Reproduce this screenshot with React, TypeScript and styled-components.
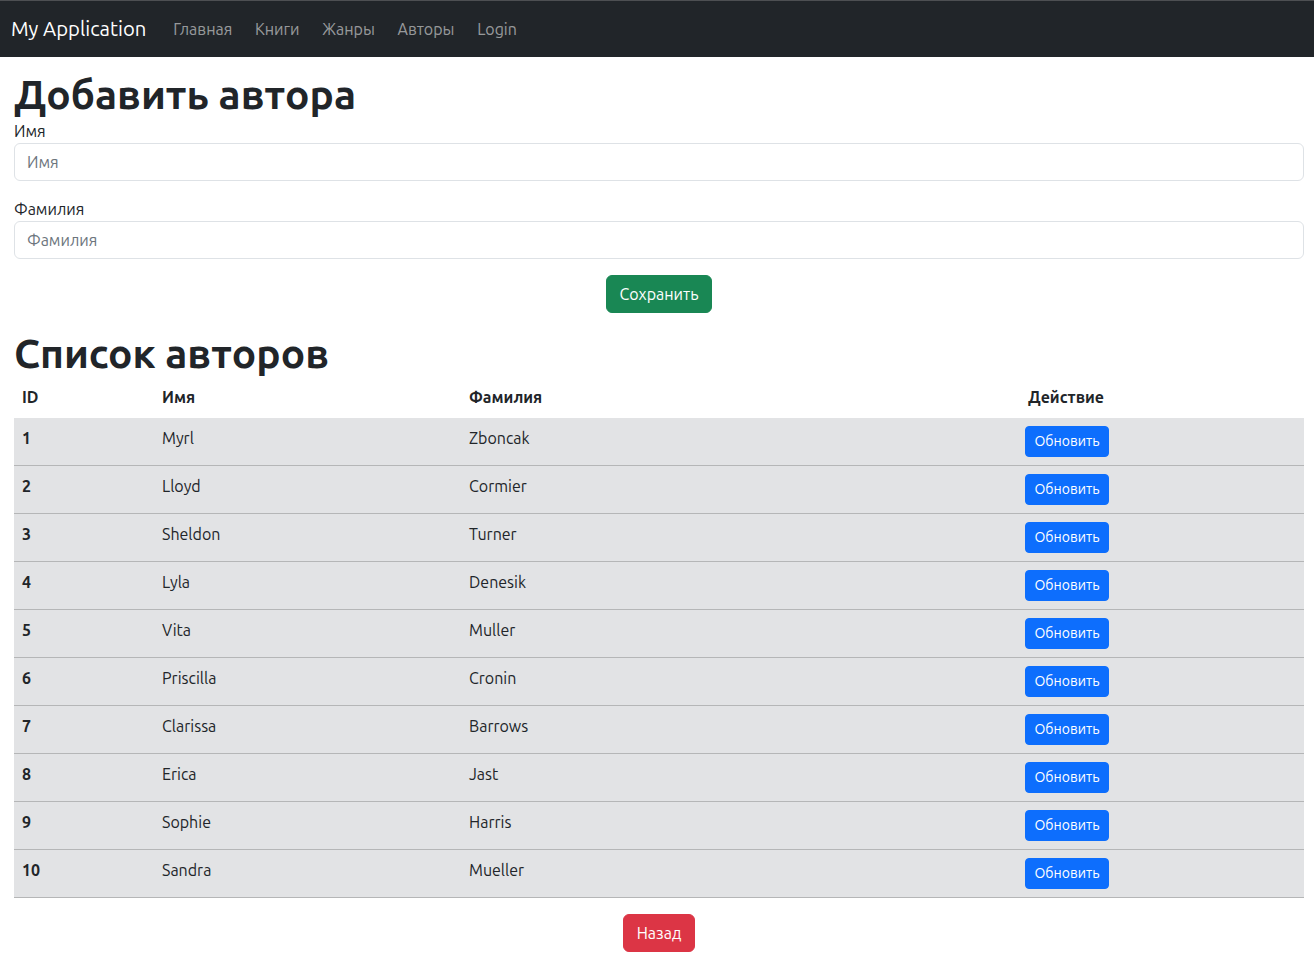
import React from "react";
import styled, { createGlobalStyle } from "styled-components";

const GlobalStyle = createGlobalStyle`
  *, *::before, *::after { box-sizing: border-box; }
  body {
    margin: 0;
    font-family: Ubuntu, "Noto Sans", "Liberation Sans", sans-serif;
    font-size: 16px;
    line-height: 1.5;
    color: #212529;
    background: #fff;
  }
`;

const Navbar = styled.nav`
  display: flex;
  align-items: center;
  height: 57px;
  background: #212529;
  border-top: 1px solid #4d4f52;
  padding: 0 11px;
`;

const Brand = styled.a`
  color: #fff;
  font-size: 20.3px;
  line-height: 30px;
  margin-right: 27px;
  text-decoration: none;
`;

const NavLink = styled.a`
  color: rgba(255, 255, 255, 0.55);
  font-size: 16px;
  line-height: 24px;
  padding: 8px 0;
  margin-right: 22.7px;
  text-decoration: none;
`;

const Main = styled.main`
  padding: 13px 10px 0 14px;
`;

const Heading = styled.h1<{ $mb?: number }>`
  font-size: 40.7px;
  font-weight: 700;
  line-height: 48px;
  margin: 0 0 ${(p) => p.$mb ?? 0}px;
`;

const Field = styled.div<{ $mb: number }>`
  margin-bottom: ${(p) => p.$mb}px;
`;

const Label = styled.label`
  display: block;
  font-size: 16px;
  line-height: 23px;
`;

const Input = styled.input`
  display: block;
  width: 100%;
  height: 38px;
  padding: 6px 12px;
  font-family: inherit;
  font-size: 16px;
  color: #212529;
  border: 1px solid #dee2e6;
  border-radius: 6px;
  &::placeholder { color: #6c757d; }
`;

const Center = styled.div<{ $mb?: number; $mt?: number }>`
  display: flex;
  justify-content: center;
  margin-top: ${(p) => p.$mt ?? 0}px;
  margin-bottom: ${(p) => p.$mb ?? 0}px;
`;

const Button = styled.button<{ $bg: string; $small?: boolean }>`
  display: block;
  font-family: inherit;
  background: ${(p) => p.$bg};
  color: #fff;
  border: 1px solid ${(p) => p.$bg};
  border-radius: ${(p) => (p.$small ? 4 : 6)}px;
  font-size: ${(p) => (p.$small ? 14 : 16)}px;
  line-height: ${(p) => (p.$small ? 21 : 24)}px;
  padding: ${(p) => (p.$small ? "4px 8.5px" : "6px 12.5px")};
  cursor: pointer;
`;

const Table = styled.table`
  width: 100%;
  border-collapse: collapse;
  table-layout: fixed;
`;

const Th = styled.th<{ $w: number; $pl?: number }>`
  width: ${(p) => p.$w}px;
  text-align: left;
  font-weight: 700;
  padding: 8px 8px 9px ${(p) => p.$pl ?? 8}px;
  line-height: 24px;
`;

const Tr = styled.tr`
  background: #e2e3e5;
  border-bottom: 1px solid #b5b6b7;
`;

const Td = styled.td<{ $bold?: boolean }>`
  padding: 8px;
  vertical-align: top;
  line-height: 24px;
  font-weight: ${(p) => (p.$bold ? 700 : 400)};
`;

const authors = [
  [1, "Myrl", "Zboncak"],
  [2, "Lloyd", "Cormier"],
  [3, "Sheldon", "Turner"],
  [4, "Lyla", "Denesik"],
  [5, "Vita", "Muller"],
  [6, "Priscilla", "Cronin"],
  [7, "Clarissa", "Barrows"],
  [8, "Erica", "Jast"],
  [9, "Sophie", "Harris"],
  [10, "Sandra", "Mueller"],
] as const;

export default function App() {
  return (
    <>
      <GlobalStyle />
      <Navbar>
        <Brand href="#">My Application</Brand>
        <NavLink href="#">Главная</NavLink>
        <NavLink href="#">Книги</NavLink>
        <NavLink href="#">Жанры</NavLink>
        <NavLink href="#">Авторы</NavLink>
        <NavLink href="#">Login</NavLink>
      </Navbar>
      <Main>
        <Heading $mb={2}>Добавить автора</Heading>
        <Field $mb={17}>
          <Label>Имя</Label>
          <Input placeholder="Имя" />
        </Field>
        <Field $mb={16}>
          <Label>Фамилия</Label>
          <Input placeholder="Фамилия" />
        </Field>
        <Center $mb={16}>
          <Button $bg="#198754">Сохранить</Button>
        </Center>
        <Heading>Список авторов</Heading>
        <Table>
          <thead>
            <tr>
              <Th $w={140}>ID</Th>
              <Th $w={307}>Имя</Th>
              <Th $w={556}>Фамилия</Th>
              <Th $w={287} $pl={11}>Действие</Th>
            </tr>
          </thead>
          <tbody>
            {authors.map(([id, first, last]) => (
              <Tr key={id}>
                <Td $bold>{id}</Td>
                <Td>{first}</Td>
                <Td>{last}</Td>
                <Td>
                  <Button $bg="#0d6efd" $small>Обновить</Button>
                </Td>
              </Tr>
            ))}
          </tbody>
        </Table>
        <Center $mt={16}>
          <Button $bg="#dc3545">Назад</Button>
        </Center>
      </Main>
    </>
  );
}
